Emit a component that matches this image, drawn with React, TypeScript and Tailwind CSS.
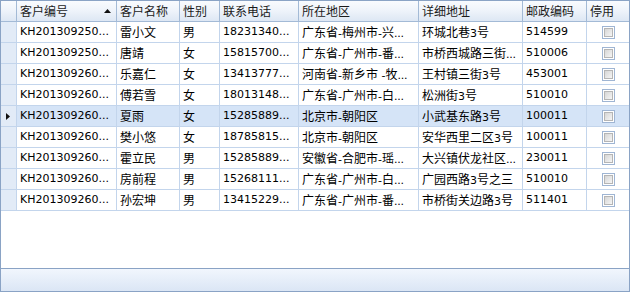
import React from "react";

type Row = string[];

const rows: Row[] = [
  ["KH201309250...", "雷小文", "男", "18231340...", "广东省-梅州市-兴...", "环城北巷3号", "514599"],
  ["KH201309250...", "唐靖", "女", "15815700...", "广东省-广州市-番...", "市桥西城路三街...", "510006"],
  ["KH201309260...", "乐嘉仁", "女", "13413777...", "河南省-新乡市 -牧...", "王村镇三街3号", "453001"],
  ["KH201309260...", "傅若雪", "女", "18013148...", "广东省-广州市-白...", "松洲街3号", "510010"],
  ["KH201309260...", "夏雨", "女", "15285889...", "北京市-朝阳区", "小武基东路3号", "100011"],
  ["KH201309260...", "樊小悠", "女", "18785815...", "北京市-朝阳区", "安华西里二区3号", "100011"],
  ["KH201309260...", "霍立民", "男", "15285889...", "安徽省-合肥市-瑶...", "大兴镇伏龙社区...", "230011"],
  ["KH201309260...", "房前程", "男", "15268111...", "广东省-广州市-白...", "广园西路3号之三", "510010"],
  ["KH201309260...", "孙宏坤", "男", "13415229...", "广东省-广州市-番...", "市桥街关边路3号", "511401"],
];

const widths = [
  "w-[100px]",
  "w-[63px]",
  "w-[40px]",
  "w-[79px]",
  "w-[120px]",
  "w-[104px]",
  "w-[64px]",
];

const headers = ["客户编号", "客户名称", "性别", "联系电话", "所在地区", "详细地址", "邮政编码"];

function Mixed({ text }: { text: string }) {
  const parts = text.split(/([\u3000-\u9fff\uff00-\uffef]+)/).filter((p) => p.length > 0);
  return (
    <span className="block whitespace-nowrap leading-[20px]">
      {parts.map((p, i) =>
        /[\u3000-\u9fff\uff00-\uffef]/.test(p) ? (
          <span key={i} className="text-[12px] tracking-normal font-['Noto_Sans_CJK_SC',sans-serif]">
            {p}
          </span>
        ) : p === "..." ? (
          <span key={i} className="tracking-[-0.3px]">
            {p}
          </span>
        ) : (
          <span key={i}>{p}</span>
        )
      )}
    </span>
  );
}

function CheckBox() {
  return (
    <div className="w-[13px] h-[13px] border border-[#9fb5d3] bg-white p-px">
      <div className="w-full h-full border border-[#b5b5b5] bg-gradient-to-br from-[#d6d6d6] to-[#f5f5f5]" />
    </div>
  );
}

export default function App() {
  return (
    <div className="w-[630px] h-[292px] border border-[#8aa3c5] bg-white flex flex-col font-['DejaVu_Sans','Noto_Sans_CJK_SC',sans-serif] text-[11px] text-black leading-none overflow-hidden">
      {/* header */}
      <div className="flex h-[21px] shrink-0 border-b border-[#a3bad6] bg-gradient-to-b from-[#f9fbfe] via-[#eef3fa] to-[#dde7f4] text-[#1b1b1b]">
        <div className="w-[16px] shrink-0 border-r border-[#a3bad6]" />
        {headers.map((h, i) => (
          <div
            key={i}
            className={`${widths[i]} shrink-0 border-r border-[#a3bad6] pl-[3px] relative overflow-hidden`}
          >
            <Mixed text={h} />
            {i === 0 && (
              <svg className="absolute left-[87px] top-[8px]" width="7" height="4" viewBox="0 0 7 4">
                <polygon points="3.5,0 7,4 0,4" fill="#111" />
              </svg>
            )}
          </div>
        ))}
        <div className="w-[42px] shrink-0 pl-[3px] overflow-hidden">
          <Mixed text="停用" />
        </div>
      </div>

      {/* rows */}
      {rows.map((r, ri) => {
        const sel = ri === 4;
        return (
          <div
            key={ri}
            className={`flex h-[21px] shrink-0 border-b border-[#c3d5ec] ${sel ? "bg-[#d5e4f7]" : "bg-white"}`}
          >
            <div className="w-[16px] shrink-0 border-r border-[#c3d5ec] bg-[#e2ebf7] flex items-center justify-center">
              {sel && (
                <svg width="4" height="7" viewBox="0 0 4 7" className="ml-[-1px]">
                  <polygon points="0,0 4,3.5 0,7" fill="#111" />
                </svg>
              )}
            </div>
            {r.map((c, ci) => (
              <div
                key={ci}
                className={`${widths[ci]} shrink-0 border-r border-[#c3d5ec] pl-[3px] overflow-hidden`}
              >
                <Mixed text={c} />
              </div>
            ))}
            <div className="w-[42px] shrink-0 flex items-center justify-center pl-px">
              <CheckBox />
            </div>
          </div>
        );
      })}

      <div className="flex-1" />

      {/* status bar */}
      <div className="h-[23px] shrink-0 border-t border-[#8aa3c5] bg-gradient-to-b from-[#f1f6fd] to-[#dbe6f5]" />
    </div>
  );
}
